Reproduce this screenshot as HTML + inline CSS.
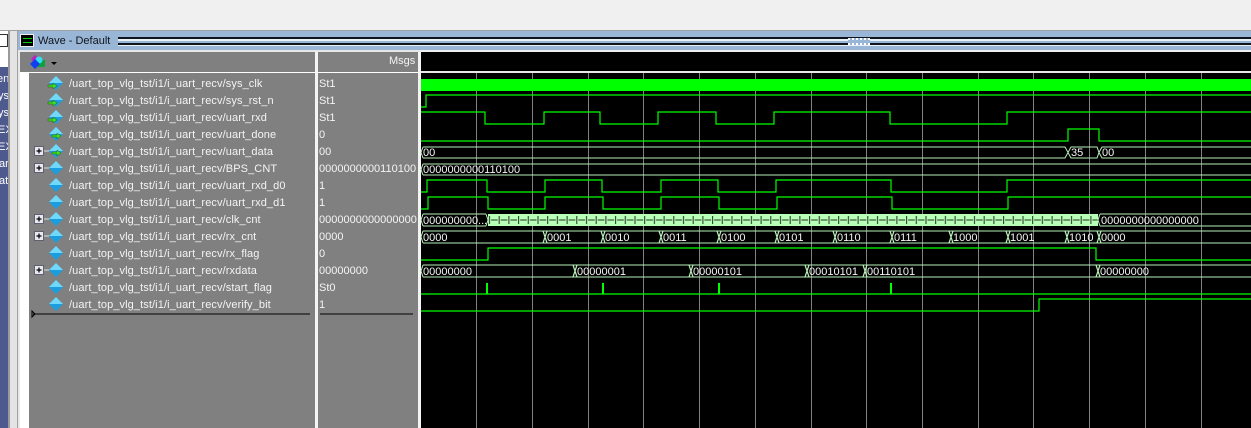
<!DOCTYPE html>
<html><head><meta charset="utf-8"><style>
*{margin:0;padding:0;box-sizing:border-box}
body{width:1251px;height:428px;overflow:hidden;background:#f0f0f0;position:relative;font-family:"Liberation Sans",sans-serif}
.a{position:absolute}
.nm{position:absolute;left:69px;font-size:11px;color:#f4f4f4;letter-spacing:0.1px;white-space:nowrap;line-height:17px}
.vl{position:absolute;left:319px;font-size:11px;color:#f4f4f4;white-space:nowrap;line-height:17px}
.lt{position:absolute;left:0;font-size:11px;color:#fff;line-height:14px}
</style></head><body>
<div class="a" style="left:0;top:30px;width:1251px;height:1px;background:#a0a0a0"></div>
<div class="a" style="left:0;top:31px;width:8px;height:36px;background:#fff"></div>
<div class="a" style="left:0;top:34px;width:8px;height:13px;border:1px solid #333;border-left:none;background:#fff"></div>
<div class="a" style="left:0;top:67px;width:8px;height:361px;background:#4e5a8e;overflow:hidden">
<div class="lt" style="top:5px;left:-3px">en</div><div class="lt" style="top:22px;left:-2px">ys</div><div class="lt" style="top:39px;left:-2px">ys</div><div class="lt" style="top:56px;left:-2px">EX</div><div class="lt" style="top:73px;left:-2px">EX</div><div class="lt" style="top:90px;left:-1px">ar</div><div class="lt" style="top:107px;left:-1px">at</div>
</div>
<div class="a" style="left:8px;top:31px;width:2px;height:397px;background:#9a9a9a"></div>
<div class="a" style="left:10px;top:31px;width:7px;height:397px;background:#e4e4e4"></div>
<div class="a" style="left:17px;top:31px;width:1px;height:397px;background:#a0a0a0"></div>
<div class="a" style="left:18px;top:31px;width:1233px;height:19px;background:#9ab6d6"></div>
<div class="a" style="left:118px;top:37px;width:1133px;height:2px;background:#10141c"></div>
<div class="a" style="left:118px;top:39px;width:1133px;height:2px;background:#e8f0f8"></div>
<div class="a" style="left:118px;top:43px;width:1133px;height:2px;background:#10141c"></div>
<div class="a" style="left:118px;top:45px;width:1133px;height:1px;background:#e8f0f8"></div>
<div class="a" style="left:848px;top:38px;width:22px;height:7px;background:#9ab6d6;border-top:2px dotted #fff;border-bottom:2px dotted #fff"></div>
<div class="a" style="left:20px;top:34px;width:14px;height:13px;background:#000;border:1px solid #eee"><div class="a" style="left:2px;top:3px;width:9px;height:5px;border-top:1px solid #0c0;border-bottom:1px solid #0c0"></div></div>
<div class="a" style="left:38px;top:34px;font-size:11px;color:#10141c;line-height:15px">Wave - Default</div>
<div class="a" style="left:18px;top:50px;width:2px;height:378px;background:#e8e8e8"></div>
<div class="a" style="left:20px;top:52px;width:295px;height:20px;background:#808080"></div>
<div class="a" style="left:20px;top:72px;width:295px;height:1px;background:#fff"></div>
<div class="a" style="left:20px;top:73px;width:9px;height:355px;background:#fff"></div>
<div class="a" style="left:29px;top:73px;width:286px;height:355px;background:#808080"></div>
<div class="a" style="left:315px;top:50px;width:3px;height:378px;background:#f4f4f4"></div>
<div class="a" style="left:318px;top:52px;width:100px;height:376px;background:#808080"></div>
<div class="a" style="left:318px;top:72px;width:100px;height:1px;background:#fff"></div>
<div class="a" style="left:418px;top:50px;width:3px;height:378px;background:#f4f4f4"></div>
<div class="a" style="left:20px;top:50px;width:401px;height:2px;background:#e8e8e8"></div>
<div class="a" style="left:389px;top:55px;font-size:11px;color:#f4f4f4">Msgs</div>
<svg class="a" style="left:29px;top:54px" width="30" height="16"><polygon points="6,1 10,5 6,9 2,5" fill="#c020c0"/><rect x="9" y="6" width="7" height="7" fill="#10a040"/><circle cx="10" cy="6" r="3.5" fill="#30e0f0"/><polygon points="6,5 11,10 6,15 1,10" fill="#1040f0"/><polygon points="22,8 28,8 25,11" fill="#000"/></svg>
<div class="nm" style="top:76px">/uart_top_vlg_tst/i1/i_uart_recv/sys_clk</div>
<div class="nm" style="top:93px">/uart_top_vlg_tst/i1/i_uart_recv/sys_rst_n</div>
<div class="nm" style="top:110px">/uart_top_vlg_tst/i1/i_uart_recv/uart_rxd</div>
<div class="nm" style="top:127px">/uart_top_vlg_tst/i1/i_uart_recv/uart_done</div>
<div class="nm" style="top:144px">/uart_top_vlg_tst/i1/i_uart_recv/uart_data</div>
<div class="nm" style="top:161px">/uart_top_vlg_tst/i1/i_uart_recv/BPS_CNT</div>
<div class="nm" style="top:178px">/uart_top_vlg_tst/i1/i_uart_recv/uart_rxd_d0</div>
<div class="nm" style="top:195px">/uart_top_vlg_tst/i1/i_uart_recv/uart_rxd_d1</div>
<div class="nm" style="top:212px">/uart_top_vlg_tst/i1/i_uart_recv/clk_cnt</div>
<div class="nm" style="top:229px">/uart_top_vlg_tst/i1/i_uart_recv/rx_cnt</div>
<div class="nm" style="top:246px">/uart_top_vlg_tst/i1/i_uart_recv/rx_flag</div>
<div class="nm" style="top:263px">/uart_top_vlg_tst/i1/i_uart_recv/rxdata</div>
<div class="nm" style="top:280px">/uart_top_vlg_tst/i1/i_uart_recv/start_flag</div>
<div class="nm" style="top:297px">/uart_top_vlg_tst/i1/i_uart_recv/verify_bit</div>
<div class="vl" style="top:76px">St1</div><div class="vl" style="top:93px">St1</div><div class="vl" style="top:110px">St1</div><div class="vl" style="top:127px">0</div><div class="vl" style="top:144px">00</div><div class="vl" style="top:161px">0000000000110100</div><div class="vl" style="top:178px">1</div><div class="vl" style="top:195px">1</div><div class="vl" style="top:212px">0000000000000000</div><div class="vl" style="top:229px">0000</div><div class="vl" style="top:246px">0</div><div class="vl" style="top:263px">00000000</div><div class="vl" style="top:280px">St0</div><div class="vl" style="top:297px">1</div>
<svg class="a" style="left:0;top:0" width="1251" height="428">
<defs>
<g id="dm"><polygon points="0,-7 7,0 0,7 -7,0" fill="#1a9ee0"/><polygon points="0,-7 7,0 0,0 -7,0" fill="#70d8f8"/></g>
<g id="ar"><polygon points="-8,2 -3,2 -3,0 1,3 -3,6 -3,4 -8,4" fill="#40e020" stroke="#206000" stroke-width="0.5"/></g>
<g id="pl"><rect x="-4.5" y="-4.5" width="9" height="9" fill="#e8e8f0" stroke="#606070"/><path d="M-2.5 0H2.5M0 -2.5V2.5" stroke="#000" stroke-width="1.2"/><path d="M5 0H10" stroke="#e0e0e0"/></g>
<pattern id="cc" x="0" y="214" width="9.7" height="12" patternUnits="userSpaceOnUse"><rect width="9.7" height="12" fill="#b8ffb8"/><path d="M0 6H3M6 6H9.7M4.5 2V10" stroke="#203020" stroke-width="1"/></pattern>
</defs>
<use href="#dm" x="56" y="83"/><use href="#ar" x="56" y="83"/>
<use href="#dm" x="56" y="100"/><use href="#ar" x="56" y="100"/>
<use href="#dm" x="56" y="117"/><use href="#ar" x="56" y="117"/>
<use href="#dm" x="56" y="134"/><use href="#ar" x="60" y="133"/>
<use href="#pl" x="39" y="151"/><use href="#dm" x="56" y="151"/><use href="#ar" x="60" y="150"/>
<use href="#pl" x="39" y="168"/><use href="#dm" x="56" y="168"/>
<use href="#dm" x="56" y="185"/><use href="#dm" x="56" y="202"/>
<use href="#pl" x="39" y="219"/><use href="#dm" x="56" y="219"/>
<use href="#pl" x="39" y="236"/><use href="#dm" x="56" y="236"/>
<use href="#dm" x="56" y="253"/>
<use href="#pl" x="39" y="270"/><use href="#dm" x="56" y="270"/>
<use href="#dm" x="56" y="287"/><use href="#dm" x="56" y="304"/>
<path d="M33 314H310M320 314H413" stroke="#000"/><path d="M32 311L35 314L32 317Z" fill="none" stroke="#000"/>
<rect x="421" y="52" width="830" height="376" fill="#000"/>
<rect x="421" y="71" width="830" height="2" fill="#e8e8e8"/>
<path stroke="#808080" d="M476.5 73V428M532.5 73V428M588.5 73V428M643.5 73V428M699.5 73V428M755.5 73V428M811.5 73V428M866.5 73V428M922.5 73V428M978.5 73V428M1033.5 73V428M1089.5 73V428M1145.5 73V428M1201.5 73V428"/>
<rect x="421" y="79" width="830" height="12" fill="#00ff00"/>
<g fill="none" stroke="#00ff00" stroke-width="1.2">
<path d="M421 107H426V95H1251"/>
<path d="M421 112H485V124H544V112H600V124H658V112H716V124H774V112H890V124H1007V112H1251"/>
<path d="M421 141H1068V129H1099V141H1251"/>
<path d="M421 192H427V180H487V192H545V180H602V192H661V180H718V192H776V180H891V192H1007V180H1251"/>
<path d="M421 209H428V197H488V209H545V197H603V209H661V197H719V209H777V197H892V209H1008V197H1251"/>
<path d="M421 260H488V248H1096V260H1251"/>
<path d="M421 294H1251"/>
<path d="M421 311H1039V299H1251"/>
</g>
<g fill="#00ff00"><rect x="486" y="283" width="2" height="11"/><rect x="602" y="283" width="2" height="11"/><rect x="718" y="283" width="2" height="11"/><rect x="890" y="283" width="2" height="11"/></g>
<rect x="488" y="214" width="610" height="12" fill="url(#cc)"/>
<g fill="none" stroke="#b8f0b8" stroke-width="1">
<path d="M423 147H1065L1068 152.5L1071 147H1097L1099 152.5L1102 147H1251M423 158H1065L1068 152.5L1071 158H1097L1099 152.5L1102 158H1251M423 147L421 152.5L423 158"/>
<path d="M423 164H1251M423 175H1251M423 164L421 169.5L423 175"/>
<path d="M423 214H486M423 226H486M423 214L421 220L423 226M486 214L488 220L486 226M1100 214H1251M1100 226H1251M1100 214L1098 220L1100 226"/>
<path d="M423 231H1251M423 243H1251M423 231L421 237L423 243"/>
<path d="M423 265H1251M423 277H1251M423 265L421 271L423 277"/>
</g>
<g stroke="#b8f0b8" stroke-width="1.2">
<path d="M543 231L547 243M543 243L547 231M601 231L605 243M601 243L605 231M659 231L663 243M659 243L663 231M717 231L721 243M717 243L721 231M775 231L779 243M775 243L779 231M833 231L837 243M833 243L837 231M890 231L894 243M890 243L894 231M949 231L953 243M949 243L953 231M1006 231L1010 243M1006 243L1010 231M1065 231L1069 243M1065 243L1069 231M1097 231L1101 243M1097 243L1101 231"/>
<path d="M573 265L577 277M573 277L577 265M689 265L693 277M689 277L693 265M805 265L809 277M805 277L809 265M863 265L867 277M863 277L867 265M1096 265L1100 277M1096 277L1100 265"/>
</g>
<g font-family="Liberation Sans,sans-serif" font-size="11" fill="#f4f4f4">
<text x="423" y="156">00</text><text x="1071" y="156">35</text><text x="1102" y="156">00</text>
<text x="423" y="173">0000000000110100</text>
<text x="423" y="224">000000000...</text><text x="1101" y="224">0000000000000000</text>
<text x="423" y="241">0000</text><text x="547" y="241">0001</text><text x="605" y="241">0010</text><text x="663" y="241">0011</text><text x="721" y="241">0100</text><text x="779" y="241">0101</text><text x="837" y="241">0110</text><text x="894" y="241">0111</text><text x="953" y="241">1000</text><text x="1010" y="241">1001</text><text x="1069" y="241">1010</text><text x="1101" y="241">0000</text>
<text x="423" y="275">00000000</text><text x="577" y="275">00000001</text><text x="693" y="275">00000101</text><text x="809" y="275">00010101</text><text x="867" y="275">00110101</text><text x="1100" y="275">00000000</text>
</g>
</svg>
</body></html>
